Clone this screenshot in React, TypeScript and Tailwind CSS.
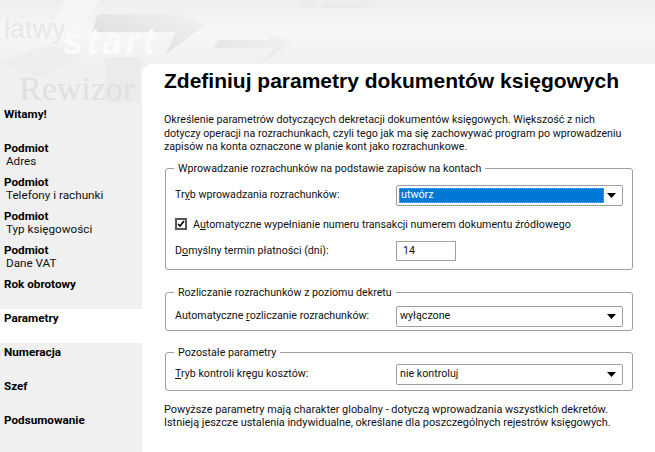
const font = '[font-family:Roboto,sans-serif]'

const steps = [
  { title: 'Witamy!' },
  { title: 'Podmiot', sub: 'Adres' },
  { title: 'Podmiot', sub: 'Telefony i rachunki' },
  { title: 'Podmiot', sub: 'Typ księgowości' },
  { title: 'Podmiot', sub: 'Dane VAT' },
  { title: 'Rok obrotowy' },
  { title: 'Parametry', active: true },
  { title: 'Numeracja' },
  { title: 'Szef' },
  { title: 'Podsumowanie' },
]

function Banner() {
  return (
    <div className="absolute inset-x-0 top-0 h-[112px] overflow-hidden bg-[linear-gradient(180deg,#eeeeee_0%,#f7f7f7_28%,#f0f0f0_58%,#f0f0f0_100%)]">
      <svg width="655" height="112" className="absolute left-0 top-0">
        <defs>
          <linearGradient id="arrow" x1="0" y1="1" x2="1" y2="0">
            <stop offset="0" stopColor="#d9d9d9" />
            <stop offset="1" stopColor="#f4f4f4" />
          </linearGradient>
        </defs>
        <path d="M66 0h34L78 30H48zM84 0h12L82 20H70z" fill="#f6f6f6" />
        <path d="M166 54l10-22H92l6-18h78l-2-6 30 18z" fill="url(#arrow)" />
        <path d="M262 62l12-14h-60l4-8h52l-6-8 29 11z" fill="url(#arrow)" opacity="0.7" />
        <path d="M300 8l4-6h8l-4 6zM310 8l4-6h4l-4 6zM320 8l5-6h40l12 3-14 3z" fill="#ebebeb" />
        <path d="M105 58h35v45h-35z" fill="#e8e8e8" opacity="0.6" />
        <path d="M0 62l50-18 30 12-40 22z" fill="#ebebeb" opacity="0.6" />
      </svg>
      <span className='absolute left-[4px] top-[13px] text-[27px] leading-[32px] text-[#e8e8e8] [font-family:"Liberation_Sans",sans-serif]'>łatwy</span>
      <span className='absolute left-[63px] top-[22px] text-[36px] leading-[40px] font-bold italic tracking-[3.5px] text-[#fbfbfb] [font-family:"Liberation_Sans",sans-serif]'>start</span>
      <span className='absolute left-[19px] top-[70px] text-[34px] leading-[38px] text-[#e0e0e0] [font-family:"Liberation_Serif",serif]'>Rewizor</span>
    </div>
  )
}

function Sidebar() {
  return (
    <aside className="relative w-[142px] shrink-0 pt-[105px]">
      {steps.map((s, i) => (
        <div key={i} className={`h-[34px] pt-[3px] pl-1 text-[11.7px] leading-[13px] text-black ${s.active ? 'bg-white' : ''}`}>
          <div className="font-bold">{s.title}</div>
          {s.sub && <div className="pl-[2px] text-[#111]">{s.sub}</div>}
        </div>
      ))}
    </aside>
  )
}

function Arrow() {
  return (
    <svg width="9" height="5" className="shrink-0">
      <path d="M0 0h9L4.5 5z" fill="#000" />
    </svg>
  )
}

function Select({ value, focused }: { value: string; focused?: boolean }) {
  return (
    <div className="flex h-[21px] w-[227px] shrink-0 items-center rounded-[2px] border border-[#a0a0a0] bg-white pl-[2px] pr-[6px]">
      <div className={`mr-[3px] flex h-[15px] flex-1 items-center pl-px ${focused ? 'border border-dotted border-[#c9a050] bg-[#0078d7] text-white' : ''}`}>
        {value}
      </div>
      <Arrow />
    </div>
  )
}

function Group({ legend, className, children }: { legend: string; className: string; children: React.ReactNode }) {
  return (
    <fieldset className={`ml-px w-[468px] rounded-[3px] border border-[#a0a0a0] pl-[9px] ${className}`}>
      <legend className="-ml-px px-[4px] leading-[13px]">{legend}</legend>
      {children}
    </fieldset>
  )
}

function Row({ className, children }: { className?: string; children: React.ReactNode }) {
  return <div className={`flex items-center ${className ?? ''}`}>{children}</div>
}

export default function App() {
  return (
    <div className={`relative flex h-[452px] w-[655px] overflow-hidden bg-[#f0f0f0] text-[10.7px] leading-[13.5px] text-[#111] ${font}`}>
      <Banner />
      <Sidebar />
      <main className="relative mt-[64px] flex-1 rounded-tl-[10px] bg-white pl-[22px]">
        <h1 className='pt-[3px] text-[21px] font-bold leading-[28px] text-black [font-family:"Liberation_Sans",sans-serif]'>
          Zdefiniuj parametry dokumentów księgowych
        </h1>
        <p className="mt-[18px] whitespace-nowrap">
          Określenie parametrów dotyczących dekretacji dokumentów księgowych. Większość z nich<br />
          dotyczy operacji na rozrachunkach, czyli tego jak ma się zachowywać program po wprowadzeniu<br />
          zapisów na konta oznaczone w planie kont jako rozrachunkowe.
        </p>

        <Group legend="Wprowadzanie rozrachunków na podstawie zapisów na kontach" className="mt-[8px] h-[108px]">
          <Row className="mt-[10px] justify-between pr-[9px]">
            <span>Tr<u>y</u>b wprowadzania rozrachunków:</span>
            <Select value="utwórz" focused />
          </Row>
          <Row className="mt-[12px] gap-[6px]">
            <span className="flex h-[12px] w-[12px] items-center justify-center border-2 border-[#555] bg-white">
              <svg width="8" height="8" viewBox="0 0 8 8"><path d="M1 4l2 2 4-5" fill="none" stroke="#000" strokeWidth="1.6" /></svg>
            </span>
            <span>A<u>u</u>tomatyczne wypełnianie numeru transakcji numerem dokumentu źródłowego</span>
          </Row>
          <Row className="mt-[10px] justify-between pr-[9px]">
            <span>D<u>o</u>myślny termin płatności (dni):</span>
            <div className="mr-[167px] flex h-[20px] w-[60px] items-center border border-[#a0a0a0] pl-[6px]">14</div>
          </Row>
        </Group>

        <Group legend="Rozliczanie rozrachunków z poziomu dekretu" className="mt-[16px] h-[45px]">
          <Row className="mt-[7px] justify-between pr-[9px]">
            <span>Automatyczne <u>r</u>ozliczanie rozrachunków:</span>
            <Select value="wyłączone" />
          </Row>
        </Group>

        <Group legend="Pozostałe parametry" className="mt-[15px] h-[45px]">
          <Row className="mt-[5px] justify-between pr-[9px]">
            <span><u>T</u>ryb kontroli kręgu kosztów:</span>
            <Select value="nie kontroluj" />
          </Row>
        </Group>

        <p className="mt-[12px] whitespace-nowrap text-[10.9px] leading-[13px]">
          Powyższe parametry mają charakter globalny - dotyczą wprowadzania wszystkich dekretów.<br />
          Istnieją jeszcze ustalenia indywidualne, określane dla poszczególnych rejestrów księgowych.
        </p>
      </main>
    </div>
  )
}
